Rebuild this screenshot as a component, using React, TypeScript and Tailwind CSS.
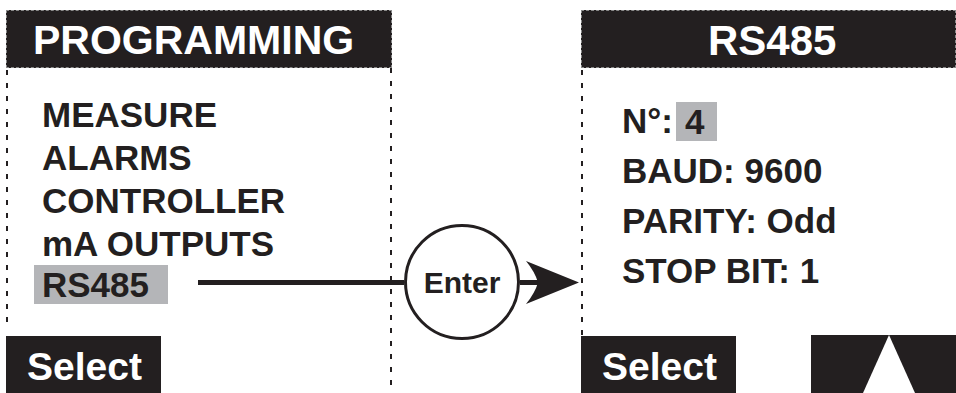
import { ReactNode } from 'react'

const ink = 'bg-[#231f20]'

function DashedLine({ className = '' }: { className?: string }) {
  return (
    <div
      className={`w-[2px] shrink-0 bg-[repeating-linear-gradient(to_bottom,#231f20_0_5px,transparent_5px_13px)] ${className}`}
    />
  )
}

function Header({ children, pad }: { children: ReactNode; pad: string }) {
  return (
    <div
      className={`mt-[10px] h-[58px] ${ink} border border-dashed border-[#8a8a8a] flex items-center pt-[3px] text-white leading-none ${pad}`}
    >
      {children}
    </div>
  )
}

function SelectButton() {
  return (
    <div className={`w-[155px] h-[57px] ${ink} pl-[21px] pt-[11px] text-white text-[39px] leading-[39px]`}>
      Select
    </div>
  )
}

export default function App() {
  const menu = ['MEASURE', 'ALARMS', 'CONTROLLER', 'mA OUTPUTS']
  const params: ReactNode[] = ['BAUD: 9600', 'PARITY: Odd', 'STOP BIT: 1']

  return (
    <div
      className="w-[956px] h-[393px] bg-white flex overflow-hidden font-bold text-[#231f20]"
      style={{ fontFamily: '"Liberation Sans", Arial, sans-serif' }}
    >
      {/* left screen */}
      <div className="ml-[6px] w-[386px] shrink-0 flex flex-col">
        <Header pad="pl-[26px] text-[41px]">PROGRAMMING</Header>
        <div className="flex-1 flex">
          <div className="flex-1 flex flex-col">
            <div className="flex-1 flex">
              <DashedLine className="mt-[2px] mb-[6px]" />
              <div className="flex-1 pl-[34px] pt-[25px] text-[35px]">
                {menu.map(item => (
                  <div key={item} className="leading-[43px] h-[43px]">
                    {item}
                  </div>
                ))}
                <div className="flex items-start h-[40px]">
                  <div className="-ml-[8px] w-[134px] h-[39px] bg-[#b4b5b8] pl-[8px] leading-[39px]">RS485</div>
                  <div className={`flex-1 ml-[30px] -mr-[2px] mt-[15px] h-[5px] ${ink}`} />
                </div>
              </div>
            </div>
            <SelectButton />
          </div>
          <DashedLine />
        </div>
      </div>

      {/* Enter connector */}
      <div className="w-[189px] shrink-0">
        <div className="mt-[224px] flex items-center">
          <div className={`w-[12px] h-[5px] ${ink}`} />
          <div className="w-[116px] h-[116px] rounded-full border-[3px] border-[#231f20] flex items-center justify-center text-[30px] leading-none pt-[2px]">
            Enter
          </div>
          <svg width="59" height="43" viewBox="0 0 59 43" className="shrink-0">
            <rect x="0" y="19" width="20" height="5" fill="#231f20" />
            <path d="M6 0 L59 21.5 L6 43 Q15 32 18 21.5 Q15 11 6 0 Z" fill="#231f20" />
          </svg>
        </div>
      </div>

      {/* right screen */}
      <div className="flex-1 flex flex-col">
        <Header pad="pl-[126px] text-[42px]">RS485</Header>
        <div className="flex-1 flex">
          <DashedLine className="mt-[2px]" />
          <div className="flex-1 pl-[39px] pt-[28px] text-[35px]">
            <div className="flex items-center h-[50px] leading-[50px]">
              <span>N°:</span>
              <span className="ml-[3px] w-[41px] h-[39px] bg-[#b4b5b8] pl-[9px] leading-[39px]">4</span>
            </div>
            {params.map((p, i) => (
              <div key={i} className="h-[50px] leading-[50px]">
                {p}
              </div>
            ))}
          </div>
        </div>
        <div className="flex">
          <SelectButton />
          <div className={`ml-[75px] flex-1 h-[58px] -mt-[1px] ${ink}`}>
            <svg width="145" height="58" viewBox="0 0 145 58">
              <polygon points="78,0 104,58 52,58" fill="#ffffff" />
            </svg>
          </div>
        </div>
      </div>
    </div>
  )
}
